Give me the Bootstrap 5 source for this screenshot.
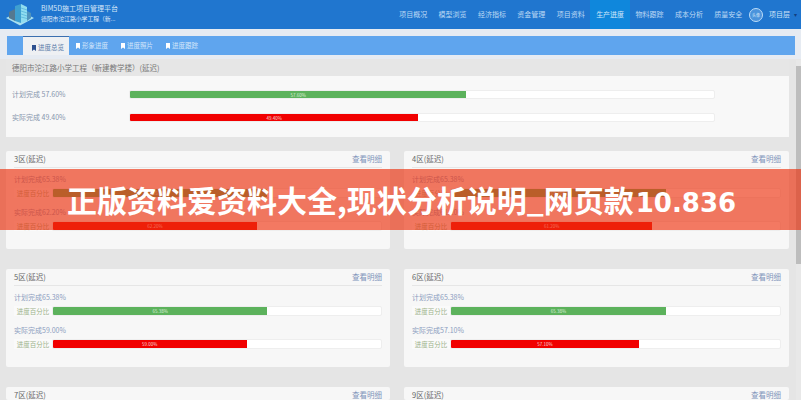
<!DOCTYPE html>
<html lang="zh">
<head>
<meta charset="UTF-8">
<title>BIM5D</title>
<link href="https://cdn.jsdelivr.net/npm/bootstrap@5.3.2/dist/css/bootstrap.min.css" rel="stylesheet">
<style>
html,body{height:400px;overflow:hidden}
body{font-family:"Noto Sans CJK SC","Liberation Sans",sans-serif;background:#e5e5e5;color:#666;font-size:8px;position:relative;line-height:1.2}
.topbar{height:29px;background:#2076cf;color:#cfe3f7}
.logo-mark{margin:3px 6px 0 5px}
.brand-title{font-size:7px;margin-top:4px;color:#d5e6f8}
.brand-sub{font-size:5.8px;margin-top:4px;color:#e2eefa}
.top-link{width:39.4px;height:29px;line-height:29px;text-align:center;font-size:7px;color:#bcd8f4;text-decoration:none}
.top-link.on{background:#0f87dc;color:#cfe8fa}
.avatar{width:14px;height:14px;border:1px solid #bcdcf8;border-radius:50%;background:#4b93dc;margin:7.5px 0 0 1px;font-size:4px;line-height:12px;text-align:center;color:#d5e6f8}
.user-name{font-size:7px;color:#cfe3f7;margin-left:6px;line-height:29px}
.user-caret{color:#123f80;font-size:6px;line-height:29px;margin-left:4px}
.tab-zone{background:#e6ebf2;padding:7px 6px 4px 7px}
.tabbar{height:19px;background:#5fa5ee}
.tab-item{height:19px;padding:0 7px;font-size:6.5px;line-height:19px;color:#d4e6fa;text-decoration:none;width:45px;white-space:nowrap}
.tab-item.on{background:#eef0f3;border-top:1px solid #3b6fb0;color:#5c7ba8;margin-left:16px;width:46px;line-height:20px;padding-left:9px}
.tab-item svg{width:4px;height:6px;margin-right:2px;vertical-align:-.5px}
.main-col{width:783px;margin-left:6px}
.head-band{height:17px;line-height:17px;background:#e6e6e6;padding-left:6px;font-size:7.5px;color:#777}
.total-panel{height:61px;background:#f8f8f8;padding-top:14px}
.total-row{height:9px;margin-bottom:14px}
.total-label{width:37px;margin-left:6px;margin-right:80px;font-size:7px;color:#8796ad;line-height:9px;white-space:nowrap}
.track{height:9px;background:#fff;border:1px solid #eee;border-radius:2px;width:586px;overflow:hidden}
.fill{height:100%;font-size:4.5px;line-height:8px;text-align:center;color:#f4d9d9;overflow:hidden}
.fill-green{background:#5cb25c;color:#dff0df}
.fill-red{background:#f10000}
.area-grid{display:grid;grid-template-columns:384px 385px;column-gap:14px;row-gap:20px;margin-top:14px}
.area-card{height:98px;background:#f7f7f7;border-radius:2px;padding:0 8px}
.area-card.cut{height:13px;overflow:hidden}
.area-head{height:17px;line-height:16px;border-bottom:1px solid #e6e6e6;font-size:7.5px;color:#666}
.area-head a{color:#7f94bb;text-decoration:none}
.plan-label{font-size:7px;color:#8c9dc0;margin-top:6px;height:11px;line-height:11px}
.plan-label.second{margin-top:9px}
.bar-row{height:10px;margin-top:3px}
.addon{width:38px;text-align:center;font-size:6.5px;line-height:10px;color:#9db38b;background:#fafafa;white-space:nowrap}
.bar-track{flex:1;height:10px;background:#fff;border:1px solid #eee;border-radius:2px;overflow:hidden}
.bar-row .fill{line-height:9px}
.scroll-track{position:absolute;right:0;top:60px;bottom:0;width:5px;background:#e8e8e8}
.scroll-thumb{width:5px;height:198px;margin-top:6px;background:#bdbdbd}
.banner{position:absolute;left:0;right:0;top:169px;height:61px;background:rgba(236,49,14,.65);color:#fff;font-weight:700;font-size:30px;line-height:61px;padding-left:67px;white-space:nowrap}
.banner-num{font-family:"DejaVu Sans",sans-serif;font-size:26px;margin-left:2px}
</style>
</head>
<body>
<nav class="topbar d-flex">
  <div class="d-flex flex-grow-1">
    <svg class="logo-mark" width="30" height="23" viewBox="0 0 30 23">
      <path d="M1 15 15 22.500 29 15 24 12.500 15 17.500 6 12.500z" fill="#a8e0f0"/>
      <path d="M4 9 10 6V18L4 15z" fill="#55788f"/>
      <path d="M10 3 16 1V20L10 18z" fill="#3fa0d0"/>
      <path d="M16 1 22 4V18L16 20z" fill="#8fdcf0"/>
      <path d="M22 8 26 10V15L22 18z" fill="#4f93bd"/>
      <path d="M16 5 22 7M16 8 22 10M16 11 22 13M16 14 22 15.500" stroke="#4fb0d8" stroke-width=".7"/>
    </svg>
    <div>
      <div class="brand-title">BIM5D施工项目管理平台</div>
      <div class="brand-sub">德阳市沱江路小学工程（新...</div>
    </div>
  </div>
  <div class="d-flex">
    <a class="top-link" href="#">项目概况</a>
    <a class="top-link" href="#">模型浏览</a>
    <a class="top-link" href="#">经济指标</a>
    <a class="top-link" href="#">资金管理</a>
    <a class="top-link" href="#">项目资料</a>
    <a class="top-link on" href="#">生产进度</a>
    <a class="top-link" href="#">物料跟踪</a>
    <a class="top-link" href="#">成本分析</a>
    <a class="top-link" href="#">质量安全</a>
    <div class="avatar">头像</div>
    <span class="user-name">项目层</span>
    <span class="user-caret me-1">▾</span>
  </div>
</nav>

<div class="tab-zone">
  <div class="tabbar d-flex">
    <a class="tab-item on" href="#"><svg viewBox="0 0 4 6"><path d="M0 0h4v6L2 4.500 0 6z" fill="#2c4f8f"/></svg>进度总览</a>
    <a class="tab-item" href="#"><svg viewBox="0 0 4 6"><path d="M0 0h4v6L2 4.500 0 6z" fill="#fff"/></svg>形象进度</a>
    <a class="tab-item" href="#"><svg viewBox="0 0 4 6"><path d="M0 0h4v6L2 4.500 0 6z" fill="#fff"/></svg>进度照片</a>
    <a class="tab-item" href="#"><svg viewBox="0 0 4 6"><path d="M0 0h4v6L2 4.500 0 6z" fill="#fff"/></svg>进度跟踪</a>
  </div>
</div>
<div class="main-col">
  <div class="head-band">德阳市沱江路小学工程（新建教学楼）(延迟)</div>
  <div class="total-panel">
    <div class="total-row d-flex">
      <div class="total-label">计划完成 57.60%</div>
      <div class="track"><div class="fill fill-green" style="width:57.6%">57.60%</div></div>
    </div>
    <div class="total-row d-flex">
      <div class="total-label">实际完成 49.40%</div>
      <div class="track"><div class="fill fill-red" style="width:49.4%">49.40%</div></div>
    </div>
  </div>
  <div class="area-grid" id="areas"></div>
</div>

<div class="scroll-track"><div class="scroll-thumb"></div></div>
<div class="banner">正版资料爱资料大全,现状分析说明_网页款<span class="banner-num">10.836</span></div>

<script>
  const areas = [
    ['3区', 65.38, 62.20], ['4区', 65.38, 61.20],
    ['5区', 65.38, 59.00], ['6区', 65.38, 57.10]
  ];
  const bars = a => `
      <div class="plan-label">计划完成${a[1].toFixed(2)}%</div>
      <div class="bar-row d-flex"><div class="addon">进度百分比</div><div class="bar-track"><div class="fill fill-green" style="width:${a[1]}%">${a[1].toFixed(2)}%</div></div></div>
      <div class="plan-label second">实际完成${a[2].toFixed(2)}%</div>
      <div class="bar-row d-flex"><div class="addon">进度百分比</div><div class="bar-track"><div class="fill fill-red" style="width:${a[2]}%">${a[2].toFixed(2)}%</div></div></div>`;
  const head = name => `<div class="area-head d-flex justify-content-between"><span>${name}(延迟)</span><a href="#">查看明细</a></div>`;
  document.getElementById('areas').innerHTML =
    areas.map(a => `<div class="area-card">${head(a[0])}${bars(a)}</div>`).join('') +
    ['7区', '9区'].map(n => `<div class="area-card cut">${head(n)}</div>`).join('');
</script>
<script src="https://cdn.jsdelivr.net/npm/bootstrap@5.3.2/dist/js/bootstrap.bundle.min.js"></script>
</body>
</html>
